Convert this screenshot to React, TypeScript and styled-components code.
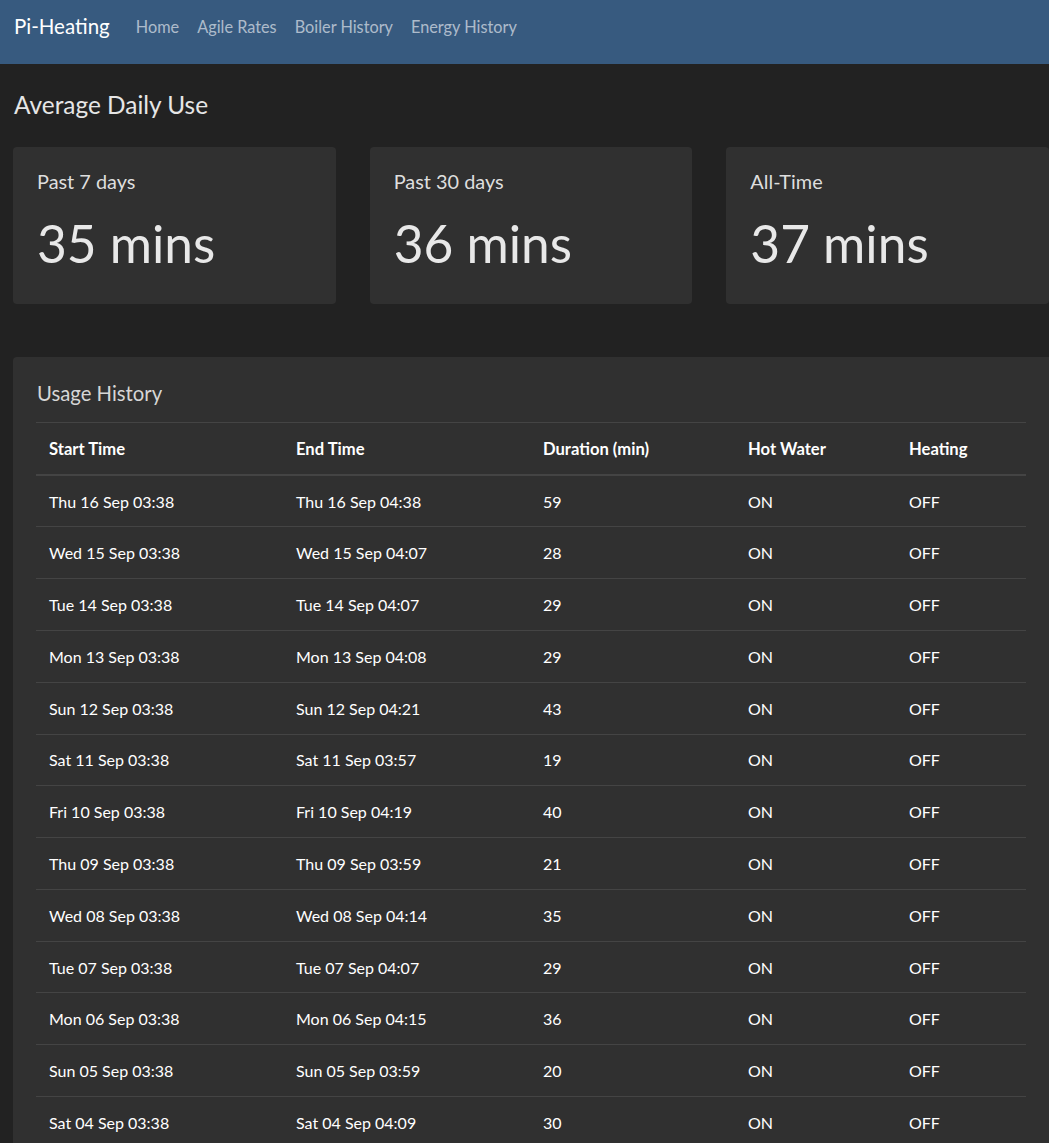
import React from "react";
import styled, { createGlobalStyle } from "styled-components";

const GlobalStyle = createGlobalStyle`
  html, body {
    margin: 0;
    padding: 0;
    overflow: hidden;
    background: #222222;
    color: #ffffff;
    font-family: Lato, "Noto Sans", "Liberation Sans", sans-serif;
    font-size: 15px;
  }
  * { box-sizing: border-box; }
`;

const Navbar = styled.nav`
  height: 64px;
  background: #375a7f;
  display: flex;
  align-items: center;
  padding: 0 14px 12px 14px;
`;

const Brand = styled.a`
  font-size: 20.5px;
  color: #ffffff;
  text-decoration: none;
  margin-right: 26px;
`;

const NavList = styled.div`
  display: flex;
  gap: 18px;
`;

const NavLink = styled.a`
  font-size: 16.3px;
  color: rgba(255, 255, 255, 0.6);
  text-decoration: none;
`;

const Main = styled.main`
  padding: 0 0 0 13px;
`;

const PageTitle = styled.h1`
  margin: 26px 0 28px 1px;
  font-size: 24.4px;
  font-weight: 400;
  line-height: 1.2;
  color: #e6e6e6;
`;

const StatGrid = styled.div`
  display: grid;
  grid-template-columns: repeat(3, 1fr);
  gap: 34px;
`;

const Card = styled.section`
  background: #303030;
  border-radius: 4px;
`;

const StatCard = styled(Card)`
  height: 157px;
  padding: 23px 24px;
`;

const CardTitle = styled.h5`
  margin: 0;
  font-size: 19.9px;
  font-weight: 400;
  line-height: 1.2;
  color: #dedede;
`;

const BigNumber = styled.div`
  margin-top: 19px;
  font-size: 51.4px;
  line-height: 1.2;
  color: #e8e8e8;
`;

const HistoryCard = styled(Card)`
  margin-top: 53px;
  padding: 24px 23px 0 23px;
  border-radius: 4px 0 0 0;
`;

const HistoryTitle = styled(CardTitle)`
  margin: 0 0 16px 1px;
  font-size: 20.3px;
  color: #d6d6d6;
`;

const Table = styled.table`
  width: 100%;
  border-collapse: collapse;
  table-layout: fixed;
  font-size: 16px;
  line-height: 22.5px;
  color: #ffffff;
`;

const Th = styled.th<{ $w: number }>`
  width: ${(p) => p.$w}px;
  text-align: left;
  font-weight: 700;
  font-size: 16.6px;
  padding: 15px 13px 13.5px 13px;
  border-top: 1px solid #444444;
  border-bottom: 2px solid #444444;
`;

const Td = styled.td`
  padding: 14.9px 13px 13.4px 13px;
  border-top: 1px solid #444444;
`;

const stats = [
  { label: "Past 7 days", value: "35 mins" },
  { label: "Past 30 days", value: "36 mins" },
  { label: "All-Time", value: "37 mins" },
];

const columns: [string, number][] = [
  ["Start Time", 247],
  ["End Time", 247],
  ["Duration (min)", 205],
  ["Hot Water", 161],
  ["Heating", 130],
];

const rows: [string, string, number][] = [
  ["Thu 16 Sep 03:38", "Thu 16 Sep 04:38", 59],
  ["Wed 15 Sep 03:38", "Wed 15 Sep 04:07", 28],
  ["Tue 14 Sep 03:38", "Tue 14 Sep 04:07", 29],
  ["Mon 13 Sep 03:38", "Mon 13 Sep 04:08", 29],
  ["Sun 12 Sep 03:38", "Sun 12 Sep 04:21", 43],
  ["Sat 11 Sep 03:38", "Sat 11 Sep 03:57", 19],
  ["Fri 10 Sep 03:38", "Fri 10 Sep 04:19", 40],
  ["Thu 09 Sep 03:38", "Thu 09 Sep 03:59", 21],
  ["Wed 08 Sep 03:38", "Wed 08 Sep 04:14", 35],
  ["Tue 07 Sep 03:38", "Tue 07 Sep 04:07", 29],
  ["Mon 06 Sep 03:38", "Mon 06 Sep 04:15", 36],
  ["Sun 05 Sep 03:38", "Sun 05 Sep 03:59", 20],
  ["Sat 04 Sep 03:38", "Sat 04 Sep 04:09", 30],
];

export default function App() {
  return (
    <>
      <GlobalStyle />
      <Navbar>
        <Brand href="#">Pi-Heating</Brand>
        <NavList>
          <NavLink href="#">Home</NavLink>
          <NavLink href="#">Agile Rates</NavLink>
          <NavLink href="#">Boiler History</NavLink>
          <NavLink href="#">Energy History</NavLink>
        </NavList>
      </Navbar>
      <Main>
        <PageTitle>Average Daily Use</PageTitle>
        <StatGrid>
          {stats.map((s) => (
            <StatCard key={s.label}>
              <CardTitle>{s.label}</CardTitle>
              <BigNumber>{s.value}</BigNumber>
            </StatCard>
          ))}
        </StatGrid>
        <HistoryCard>
          <HistoryTitle>Usage History</HistoryTitle>
          <Table>
            <thead>
              <tr>
                {columns.map(([name, w]) => (
                  <Th key={name} $w={w}>
                    {name}
                  </Th>
                ))}
              </tr>
            </thead>
            <tbody>
              {rows.map(([start, end, dur]) => (
                <tr key={start}>
                  <Td>{start}</Td>
                  <Td>{end}</Td>
                  <Td>{dur}</Td>
                  <Td>ON</Td>
                  <Td>OFF</Td>
                </tr>
              ))}
            </tbody>
          </Table>
        </HistoryCard>
      </Main>
    </>
  );
}
